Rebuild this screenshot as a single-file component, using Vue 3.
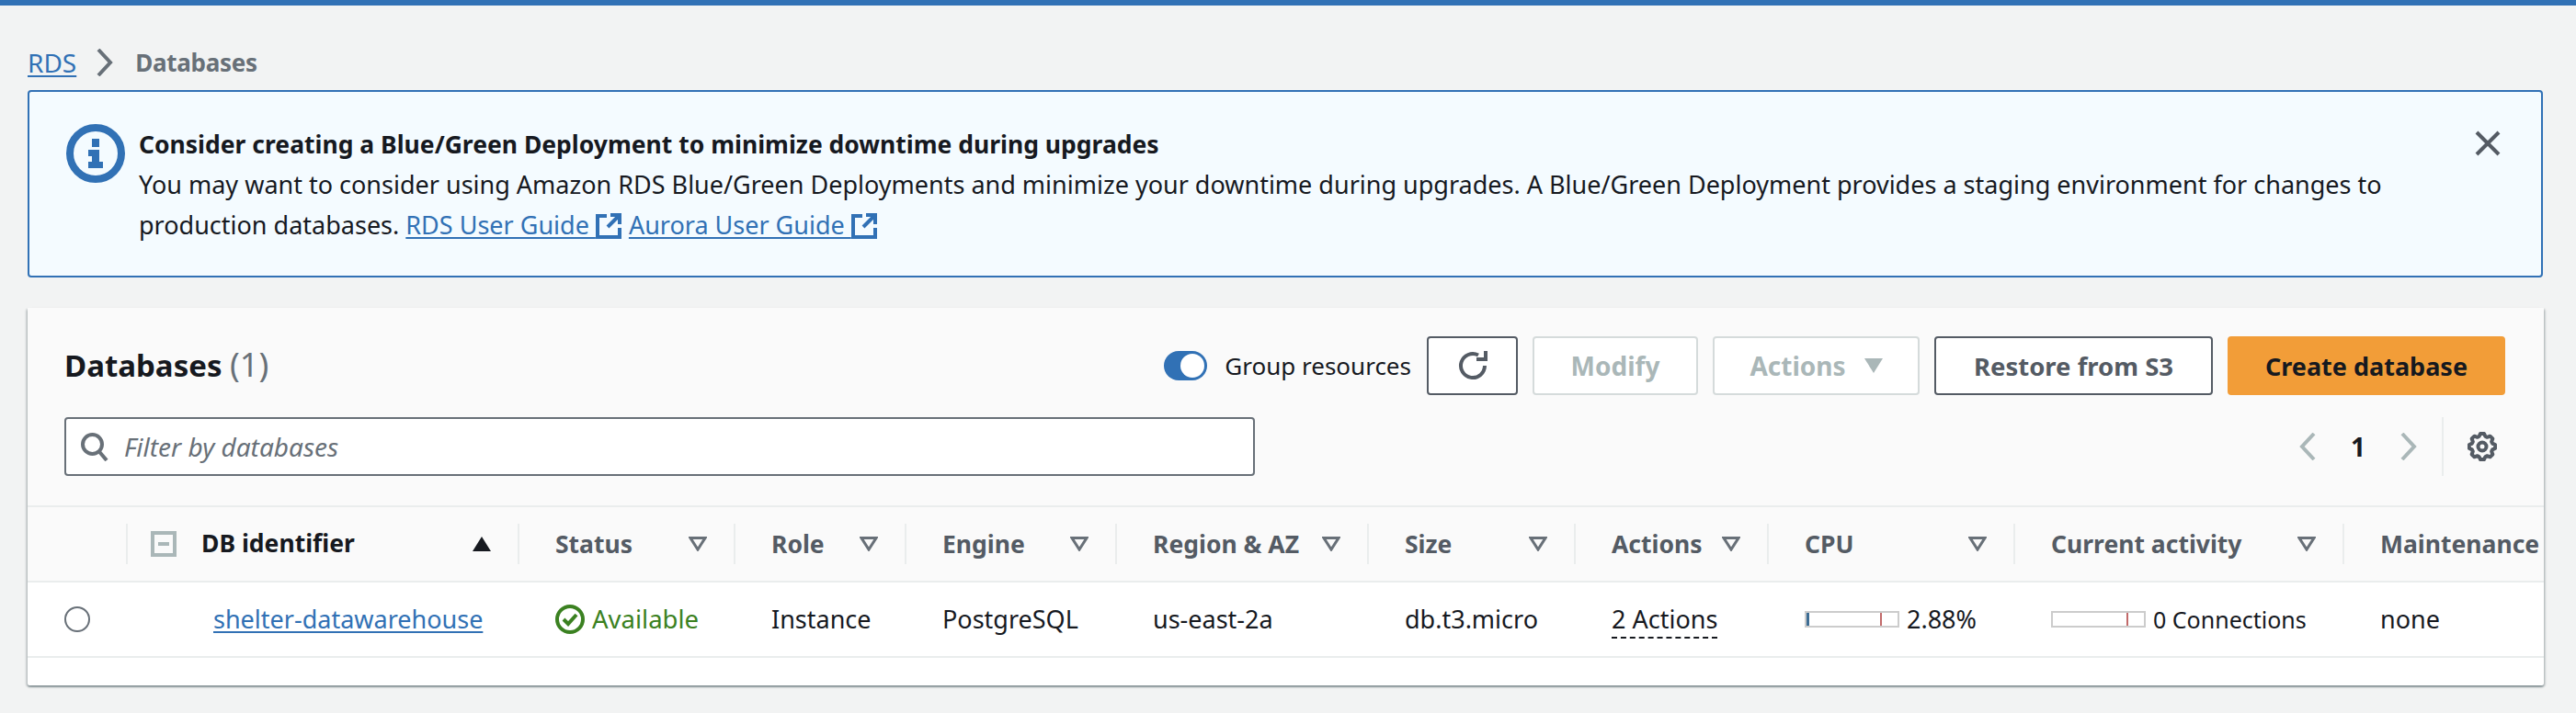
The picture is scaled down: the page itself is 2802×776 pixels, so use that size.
<template>
  <div class="top-bar"></div>
  <div class="page">
    <nav class="breadcrumb">
      <a class="link crumb-link">RDS</a>
      <svg class="crumb-chevron" width="18" height="30" viewBox="0 0 18 30">
        <path d="M2 1l13 14L2 29" fill="none" stroke="#687078" stroke-width="4" />
      </svg>
      <span class="crumb-current">Databases</span>
    </nav>

    <div class="alert">
      <svg class="alert-icon" width="64" height="64" viewBox="0 0 64 64">
        <circle cx="32" cy="32" r="28" fill="none" stroke="#3171b5" stroke-width="8" />
        <rect x="28" y="16" width="8" height="9" fill="#3171b5" />
        <path d="M24 28H36V41H40V48H24V41H28V35H24Z" fill="#3171b5" />
      </svg>
      <div class="alert-body">
        <div class="alert-title">Consider creating a Blue/Green Deployment to minimize downtime during upgrades</div>
        <div class="alert-text">
          You may want to consider using Amazon RDS Blue/Green Deployments and minimize your downtime during upgrades. A Blue/Green Deployment provides a staging environment for changes to production databases.
          <a class="link">RDS User Guide <svg class="ext-icon" width="28" height="28" viewBox="0 0 28 28">
            <path d="M12 3H2V26H26V16M16 2H26V12M26 2L13 15" fill="none" stroke="#3171b5" stroke-width="4" />
          </svg></a>
          <a class="link link-next">Aurora User Guide <svg class="ext-icon" width="28" height="28" viewBox="0 0 28 28">
            <path d="M12 3H2V26H26V16M16 2H26V12M26 2L13 15" fill="none" stroke="#3171b5" stroke-width="4" />
          </svg></a>
        </div>
      </div>
      <svg class="alert-close" width="28" height="28" viewBox="0 0 28 28">
        <path d="M2 2L26 26M26 2L2 26" fill="none" stroke="#545b64" stroke-width="4" />
      </svg>
    </div>

    <section class="panel">
      <header class="panel-header">
        <div class="panel-row">
          <h2 class="panel-title">Databases <span class="panel-count">(1)</span></h2>
          <div class="panel-actions">
            <div class="toggle"><span class="toggle-knob"></span></div>
            <span class="toggle-label">Group resources</span>
            <button class="btn btn-icon">
              <svg width="32" height="32" viewBox="0 0 32 32">
                <path d="M29 16A13 13 0 1 1 22 4.5" fill="none" stroke="#545b64" stroke-width="4" />
                <path d="M20 9H30V0" fill="none" stroke="#545b64" stroke-width="4" />
              </svg>
            </button>
            <button class="btn btn-disabled btn-modify">Modify</button>
            <button class="btn btn-disabled btn-menu">
              Actions
              <svg width="20" height="16" viewBox="0 0 20 16"><path d="M0 0H20L10 16Z" fill="#aab7b8" /></svg>
            </button>
            <button class="btn btn-restore">Restore from S3</button>
            <button class="btn btn-primary">Create database</button>
          </div>
        </div>
        <div class="panel-row">
          <div class="filter">
            <svg width="32" height="32" viewBox="0 0 32 32">
              <circle cx="13.5" cy="13.5" r="10.5" fill="none" stroke="#687078" stroke-width="4" />
              <path d="M20.5 21L29 31" fill="none" stroke="#687078" stroke-width="4" />
            </svg>
            <span class="filter-text">Filter by databases</span>
          </div>
          <div class="pager">
            <svg width="18" height="30" viewBox="0 0 18 30"><path d="M16 1L3 15l13 14" fill="none" stroke="#aab7b8" stroke-width="4" /></svg>
            <span class="pager-num">1</span>
            <svg width="18" height="30" viewBox="0 0 18 30"><path d="M2 1l13 14L2 29" fill="none" stroke="#aab7b8" stroke-width="4" /></svg>
            <div class="pager-settings">
              <svg width="32" height="32" viewBox="0 0 32 32">
                <path :d="gearPath" fill="none" stroke="#545b64" stroke-width="4" stroke-linejoin="round" />
                <circle cx="16" cy="16" r="4.5" fill="none" stroke="#545b64" stroke-width="4" />
              </svg>
            </div>
          </div>
        </div>
      </header>

      <table class="db-table">
        <colgroup>
          <col v-for="w in colWidths" :key="w" :style="{ width: w + 'px' }" />
        </colgroup>
        <thead>
          <tr>
            <th></th>
            <th>
              <div class="th-inner th-id">
                <span class="th-select"><span class="th-minus"></span></span>
                <span class="th-id-label">DB identifier</span>
                <svg width="20" height="16" viewBox="0 0 20 16"><path d="M10 0L20 16H0Z" fill="#16191f" /></svg>
              </div>
            </th>
            <th v-for="col in columns" :key="col">
              <div class="th-inner">
                <span>{{ col }}</span>
                <svg v-if="col !== 'Maintenance'" width="20" height="16" viewBox="0 0 20 16">
                  <path d="M2 1.5H18L10 14Z" fill="none" stroke="#687078" stroke-width="3" />
                </svg>
              </div>
            </th>
          </tr>
        </thead>
        <tbody>
          <tr>
            <td class="td-radio"><span class="radio"></span></td>
            <td class="td-id"><a class="link">shelter-datawarehouse</a></td>
            <td>
              <span class="status">
                <svg width="32" height="32" viewBox="0 0 32 32">
                  <circle cx="16" cy="16" r="14" fill="none" stroke="#3b8121" stroke-width="4" />
                  <path d="M9 16l5 5 9-10" fill="none" stroke="#3b8121" stroke-width="4" />
                </svg>
                Available
              </span>
            </td>
            <td>Instance</td>
            <td>PostgreSQL</td>
            <td>us-east-2a</td>
            <td>db.t3.micro</td>
            <td><span class="dashed">2 Actions</span></td>
            <td>
              <span class="metric">
                <span class="meter"><span class="meter-fill" :style="{ width: cpuFill + 'px' }"></span><span class="meter-tick"></span></span>
                2.88%
              </span>
            </td>
            <td>
              <span class="metric metric-small">
                <span class="meter"><span class="meter-tick"></span></span>
                0 Connections
              </span>
            </td>
            <td>none</td>
          </tr>
        </tbody>
      </table>
      <div class="panel-footer"></div>
    </section>
  </div>
</template>

<script setup>
const colWidths = [107, 426, 235, 186, 229, 274, 225, 210, 268, 358, 219]
const columns = ['Status', 'Role', 'Engine', 'Region & AZ', 'Size', 'Actions', 'CPU', 'Current activity', 'Maintenance']
const cpuFill = 3

// 8 toothed gear outline
function buildGear() {
  const pts = []
  for (let i = 0; i < 8; i++) {
    const a = (i * Math.PI) / 4 - Math.PI / 2
    const step = 0.2
    pts.push([a - step * 1.5, 11.5], [a - step * 0.7, 14.2], [a + step * 0.7, 14.2], [a + step * 1.5, 11.5])
  }
  const d = pts.map(([ang, r]) => `${(16 + r * Math.cos(ang)).toFixed(2)} ${(16 + r * Math.sin(ang)).toFixed(2)}`)
  return 'M' + d.join('L') + 'Z'
}
const gearPath = buildGear()
</script>

<style>
html, body {
  margin: 0;
  background: #f2f3f3;
}
</style>

<style scoped>
.top-bar {
  height: 6px;
  background: #3171b5;
  box-shadow: 0 1px 2px rgba(0, 0, 0, 0.35);
}

.page {
  box-sizing: border-box;
  min-height: 770px;
  padding: 42px 36px 0 30px;
  background: #f2f3f3;
  font-family: "Noto Sans", sans-serif;
  font-size: 27px;
  line-height: 44px;
  color: #16191f;
}

.link {
  color: #3171b5;
  text-decoration: underline;
  text-underline-offset: 3px;
}

.breadcrumb {
  display: flex;
  align-items: center;
  gap: 22px;
  height: 40px;
  margin-bottom: 10px;
}

.crumb-link {
  font-size: 28px;
}

.crumb-current {
  font-size: 26px;
  font-weight: 700;
  letter-spacing: -0.3px;
  color: #687078;
  margin-left: 2px;
}

.alert {
  display: flex;
  align-items: flex-start;
  box-sizing: border-box;
  height: 204px;
  padding: 35px 44px 0 40px;
  border: 2px solid #3171b5;
  border-radius: 4px;
  background: #f4fbff;
}

.alert-icon {
  flex-shrink: 0;
  margin-right: 15px;
}

.alert-body {
  flex: 1;
}

.alert-title {
  font-size: 26.5px;
  font-weight: 700;
}

.ext-icon {
  vertical-align: -5px;
}

.link-next {
  margin-left: 8px;
}

.alert-close {
  flex-shrink: 0;
  margin: 7px 0 0 40px;
}

.panel {
  margin: 33px -1px 0 0;
  border-radius: 2px;
  background: #fff;
  box-shadow: 0 2px 2px 0 rgba(0, 28, 36, 0.35), 2px 1px 2px 0 rgba(0, 28, 36, 0.15), -2px 1px 2px 0 rgba(0, 28, 36, 0.15);
}

.panel-header {
  display: flex;
  flex-direction: column;
  gap: 24px;
  box-sizing: border-box;
  height: 217px;
  padding: 31px 42px 0 40px;
  border-bottom: 2px solid #eaeded;
  background: #fafafa;
}

.panel-row {
  display: flex;
  align-items: center;
  justify-content: space-between;
  height: 64px;
}

.panel-title {
  margin: 0 0 2px;
  font-size: 33px;
  font-weight: 700;
}

.panel-count {
  font-size: 36px;
  font-weight: 400;
  color: #687078;
}

.panel-actions {
  display: flex;
  align-items: center;
  gap: 16px;
}

.toggle {
  display: flex;
  align-items: center;
  justify-content: flex-end;
  box-sizing: border-box;
  width: 47px;
  height: 32px;
  padding-right: 3px;
  border-radius: 16px;
  background: #3171b5;
}

.toggle-knob {
  width: 26px;
  height: 26px;
  border-radius: 50%;
  background: #fff;
}

.toggle-label {
  margin: 0 1px 0 3px;
  font-size: 26px;
}

.btn {
  box-sizing: border-box;
  height: 64px;
  padding: 0;
  border: 2px solid #545b64;
  border-radius: 4px;
  background: #fff;
  font-family: inherit;
  font-size: 28px;
  font-weight: 700;
  color: #545b64;
}

.btn-icon {
  display: flex;
  align-items: center;
  justify-content: center;
  width: 99px;
}

.btn-disabled {
  border-color: #d5dbdb;
  color: #aab7b8;
}

.btn-modify {
  width: 180px;
}

.btn-menu {
  display: flex;
  align-items: center;
  justify-content: center;
  gap: 20px;
  width: 225px;
}

.btn-restore {
  width: 303px;
  font-size: 27.5px;
}

.btn-primary {
  width: 302px;
  border-color: #f29d38;
  background: #f29d38;
  font-size: 27px;
  color: #16191f;
}

.filter {
  display: flex;
  align-items: center;
  gap: 16px;
  box-sizing: border-box;
  width: 1295px;
  height: 64px;
  padding-left: 15px;
  border: 2px solid #687078;
  border-radius: 4px;
  background: #fff;
  font-size: 28px;
}

.filter-text {
  font-style: italic;
  color: #687078;
}

.pager {
  display: flex;
  align-items: center;
  margin-right: 9px;
}

.pager-num {
  width: 92px;
  text-align: center;
  font-size: 28px;
  font-weight: 700;
}

.pager-settings {
  display: flex;
  align-items: center;
  box-sizing: border-box;
  height: 64px;
  margin-left: 27px;
  padding-left: 26px;
  border-left: 2px solid #eaeded;
}

.db-table {
  width: 2737px;
  table-layout: fixed;
  border-collapse: separate;
  border-spacing: 0;
}

.db-table th {
  box-sizing: border-box;
  height: 82px;
  padding: 0;
  border-bottom: 2px solid #eaeded;
  background: #fafafa;
  font-size: 26.5px;
  font-weight: 700;
  text-align: left;
  color: #545b64;
}

.th-inner {
  display: flex;
  align-items: center;
  justify-content: space-between;
  box-sizing: border-box;
  height: 44px;
  padding: 0 29px 0 39px;
  border-left: 2px solid #eaeded;
  white-space: nowrap;
}

.th-id {
  justify-content: flex-start;
  padding-left: 25px;
  color: #16191f;
}

.th-id-label {
  flex: 1;
  margin: 0 0 3px 27px;
}

.th-select {
  display: flex;
  align-items: center;
  justify-content: center;
  box-sizing: border-box;
  width: 28px;
  height: 28px;
  border: 4px solid #aab7b8;
  background: #fafafa;
}

.th-minus {
  width: 12px;
  height: 4px;
  background: #aab7b8;
}

.db-table td {
  box-sizing: border-box;
  height: 82px;
  padding: 0 0 0 41px;
  border-bottom: 2px solid #eaeded;
  background: #fff;
  white-space: nowrap;
}

.db-table td.td-radio {
  padding-left: 40px;
}

.db-table td.td-id {
  padding-left: 95px;
}

.radio {
  display: block;
  box-sizing: border-box;
  width: 28px;
  height: 28px;
  border: 2px solid #687078;
  border-radius: 50%;
}

.status {
  display: flex;
  align-items: center;
  gap: 8px;
  font-size: 27.5px;
  color: #3b8121;
}

.dashed {
  display: inline-block;
  line-height: 38px;
  border-bottom: 2px dashed #16191f;
}

.metric {
  display: flex;
  align-items: center;
  gap: 8px;
}

.metric-small {
  font-size: 25px;
}

.meter {
  display: block;
  position: relative;
  flex-shrink: 0;
  box-sizing: border-box;
  width: 103px;
  height: 18px;
  border: 2px solid #ccc;
  background: #fff;
}

.meter-fill {
  display: block;
  height: 100%;
  background: #3d6d94;
}

.meter-tick {
  position: absolute;
  top: 0;
  bottom: 0;
  left: 80px;
  width: 2px;
  background: #c26a6a;
}

.panel-footer {
  height: 30px;
}
</style>
